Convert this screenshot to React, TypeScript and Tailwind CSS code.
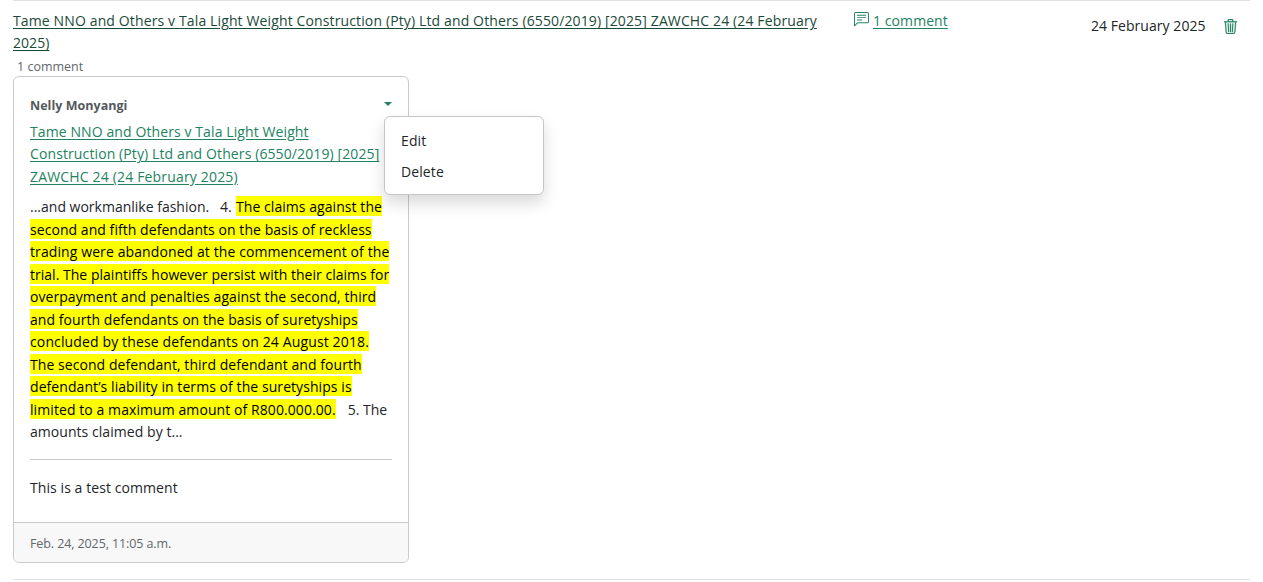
import { BsChatLeftText, BsTrash3 } from "react-icons/bs";

type Line = { text: string; track: string };

const titleLines: Line[] = [
  { text: "Tame NNO and Others v Tala Light Weight Construction (Pty) Ltd and Others (6550/2019) [2025] ZAWCHC 24 (24 February", track: "tracking-[0.13px]" },
  { text: "2025)", track: "tracking-[0.05px]" },
];

const linkLines: Line[] = [
  { text: "Tame NNO and Others v Tala Light Weight", track: "tracking-[0.1px]" },
  { text: "Construction (Pty) Ltd and Others (6550/2019) [2025]", track: "tracking-[0.11px]" },
  { text: "ZAWCHC 24 (24 February 2025)", track: "tracking-[0.17px]" },
];

const markedLines: Line[] = [
  { text: "second and fifth defendants on the basis of reckless", track: "tracking-[0.055px]" },
  { text: "trading were abandoned at the commencement of the", track: "tracking-[0.1px]" },
  { text: "trial. The plaintiffs however persist with their claims for", track: "tracking-[0.02px]" },
  { text: "overpayment and penalties against the second, third", track: "tracking-[0.06px]" },
  { text: "and fourth defendants on the basis of suretyships", track: "tracking-[0.05px]" },
  { text: "concluded by these defendants on 24 August 2018.", track: "tracking-[0.13px]" },
  { text: "The second defendant, third defendant and fourth", track: "tracking-[0.06px]" },
  { text: "defendant’s liability in terms of the suretyships is", track: "tracking-[0.07px]" },
];

function Mark({ children, track }: { children: string; track: string }) {
  return <mark className={`inline-block h-5 bg-[#ffff00] leading-[21px] text-black ${track}`}>{children}</mark>;
}

export default function App() {
  return (
    <div className="h-[582px] w-[1263px] overflow-hidden bg-white pl-[13px] pr-[13px] font-['Open_Sans','Noto_Sans',sans-serif] text-[14px] leading-[22.5px] text-[#212529]">
      <div className="flex h-[580px] border-y border-[#dee2e6]">
        <div className="w-[840px] pt-[9px]">
          <a className="block whitespace-nowrap leading-[22px] text-[#1a4a38] underline underline-offset-2">
            {titleLines.map((l) => <span key={l.text} className={`block w-fit ${l.track}`}>{l.text}</span>)}
          </a>
          <div className="h-[22px] pl-1 pt-[3px] text-[12.5px] leading-[20px] text-[#62676c]">1 comment</div>
          <div className="flex h-[487px] w-[396px] flex-col overflow-visible rounded-[6px] border border-[#c9cacb] whitespace-nowrap">
            <div className="flex-1 px-4 pt-[17px]">
              <div className="relative flex h-[22.5px] items-center justify-between">
                <span className="pt-[2px] text-[12.5px] font-bold tracking-[0.03px] text-[#55595c]">Nelly Monyangi</span>
                <svg className="mb-[3px]" width="8" height="4" viewBox="0 0 8 4" fill="#238260"><path d="M0 0H8L4 4Z" /></svg>
                <div className="absolute left-[354px] top-[22px] z-10 h-[79px] w-[160px] rounded-[6px] border border-[#c5c6c7] bg-white px-4 pt-[8px] shadow-[0_8px_16px_rgba(0,0,0,0.15)]">
                  <div className="leading-[31px] tracking-[0.1px]">Edit</div>
                  <div className="leading-[31px] tracking-[0.1px]">Delete</div>
                </div>
              </div>
              <a className="mt-[4px] block text-[#238260] underline underline-offset-2">
                {linkLines.map((l) => <span key={l.text} className={`block w-fit ${l.track}`}>{l.text}</span>)}
              </a>
              <div className="mt-[8px]">
                <div className="flex h-[22.5px]"><span className="w-[206px]">...and workmanlike fashion. &nbsp; 4.</span><Mark track="tracking-[0.06px]">The claims against the</Mark></div>
                {markedLines.map((l) => <div key={l.text} className="h-[22.5px]"><Mark track={l.track}>{l.text}</Mark></div>)}
                <div className="flex h-[22.5px]"><Mark track="tracking-[0.08px]">limited to a maximum amount of R800.000.00.</Mark><span className="pl-3">5. The</span></div>
                <div className="tracking-[0.05px]">amounts claimed by t...</div>
              </div>
              <hr className="mt-[15px] border-[#c8c9ca]" />
              <p className="mt-[17px] tracking-[0.08px]">This is a test comment</p>
            </div>
            <div className="h-[40px] rounded-b-[5px] border-t border-[#c9cacb] bg-[#f8f8f8] px-4 text-[12.5px] leading-[41px] tracking-[-0.1px] text-[#62676c]">Feb. 24, 2025, 11:05 a.m.</div>
          </div>
        </div>
        <div className="flex h-[40px] w-[238px] items-center gap-1 pl-px text-[#238260]">
          <BsChatLeftText size={15} className="mb-[3px]" />
          <a className="tracking-[0.08px] underline underline-offset-2">1 comment</a>
        </div>
        <div className="flex h-[50px] flex-1 items-center justify-between pr-[12px]">
          <span className="tracking-[0.05px]">24 February 2025</span>
          <BsTrash3 size={15} strokeWidth={0.3} className="text-[#238260]" />
        </div>
      </div>
    </div>
  );
}
